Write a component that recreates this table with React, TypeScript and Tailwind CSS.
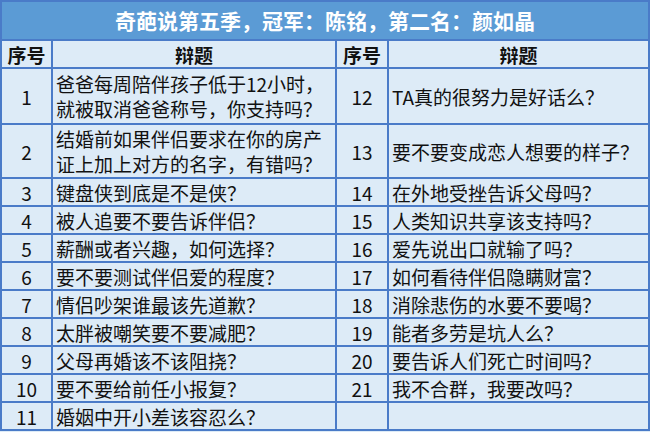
const LEFT: { n: string; lines: string[] }[] = [
  { n: '1', lines: ['爸爸每周陪伴孩子低于12小时，', '就被取消爸爸称号，你支持吗？'] },
  { n: '2', lines: ['结婚前如果伴侣要求在你的房产', '证上加上对方的名字，有错吗？'] },
  { n: '3', lines: ['键盘侠到底是不是侠？'] },
  { n: '4', lines: ['被人追要不要告诉伴侣？'] },
  { n: '5', lines: ['薪酬或者兴趣，如何选择？'] },
  { n: '6', lines: ['要不要测试伴侣爱的程度？'] },
  { n: '7', lines: ['情侣吵架谁最该先道歉？'] },
  { n: '8', lines: ['太胖被嘲笑要不要减肥？'] },
  { n: '9', lines: ['父母再婚该不该阻挠？'] },
  { n: '10', lines: ['要不要给前任小报复？'] },
  { n: '11', lines: ['婚姻中开小差该容忍么？'] },
];

const RIGHT: { n: string; text: string }[] = [
  { n: '12', text: 'TA真的很努力是好话么？' },
  { n: '13', text: '要不要变成恋人想要的样子？' },
  { n: '14', text: '在外地受挫告诉父母吗？' },
  { n: '15', text: '人类知识共享该支持吗？' },
  { n: '16', text: '爱先说出口就输了吗？' },
  { n: '17', text: '如何看待伴侣隐瞒财富？' },
  { n: '18', text: '消除悲伤的水要不要喝？' },
  { n: '19', text: '能者多劳是坑人么？' },
  { n: '20', text: '要告诉人们死亡时间吗？' },
  { n: '21', text: '我不合群，我要改吗？' },
  { n: '', text: '' },
];

const HEIGHTS = ['h-[56px]', 'h-[54px]', 'h-[28px]', 'h-[28px]', 'h-[28px]', 'h-[28px]', 'h-[28px]', 'h-[28px]', 'h-[28px]', 'h-[28px]', 'h-[28px]'];

const cell = 'border-2 border-[#4a7bc8] bg-[#ddebf7] p-0';

export default function App() {
  return (
    <div className="w-[650px] h-[432px] bg-[#ddebf7] overflow-hidden font-['Noto_Sans_CJK_SC',sans-serif] text-[#111]">
      <table className="w-[650px] table-fixed border-collapse">
        <colgroup>
          <col className="w-[51px]" />
          <col className="w-[284px]" />
          <col className="w-[52px]" />
          <col />
        </colgroup>
        <tbody>
          <tr className="h-[39px]">
            <td
              colSpan={4}
              className="border-2 border-[#4a7bc8] bg-[#5b9bd5] p-0 text-center text-[21px] font-bold leading-none text-white"
            >
              奇葩说第五季，冠军：陈铭，第二名：颜如晶
            </td>
          </tr>
          <tr className="h-[28px] text-[19px] font-bold leading-none">
            <td className={`${cell} text-center`}>序号</td>
            <td className={`${cell} text-center`}>辩题</td>
            <td className={`${cell} text-center`}>序号</td>
            <td className={`${cell} text-center`}>辩题</td>
          </tr>
          {LEFT.map((row, i) => (
            <tr key={row.n} className={`${HEIGHTS[i]} text-[19px]`}>
              <td className={`${cell} text-center leading-none`}>{row.n}</td>
              <td className={`${cell} pl-[3px] leading-[25px] whitespace-nowrap`}>
                {row.lines.map((l) => (
                  <div key={l}>{l}</div>
                ))}
              </td>
              <td className={`${cell} text-center leading-none`}>{RIGHT[i].n}</td>
              <td className={`${cell} pl-[3px] leading-none whitespace-nowrap`}>{RIGHT[i].text}</td>
            </tr>
          ))}
        </tbody>
      </table>
    </div>
  );
}
